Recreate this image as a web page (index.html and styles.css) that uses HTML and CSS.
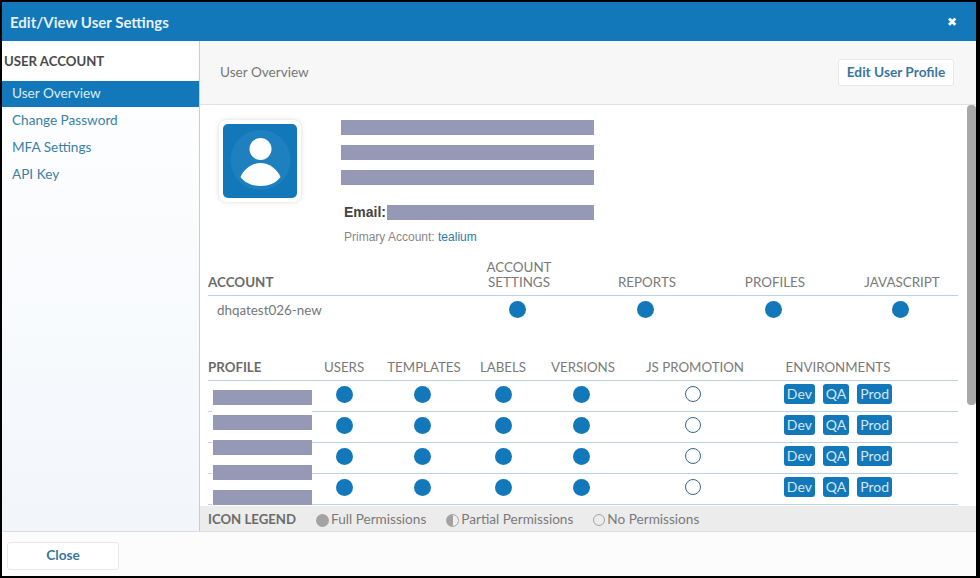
FILE: index.html
```html
<!DOCTYPE html>
<html lang="en">
<head>
    <meta charset="UTF-8">
    <title>Edit/View User Settings</title>
    <link rel="stylesheet" href="styles.css">
</head>
<body>
    <div class="modal">
        <header class="modal-header">
            <h1>Edit/View User Settings</h1>
            <span class="close-x">&#10006;</span>
        </header>
        <div class="modal-body">
            <aside class="sidebar">
                <h2>USER ACCOUNT</h2>
                <ul>
                    <li class="active"><a href="#">User Overview</a></li>
                    <li><a href="#">Change Password</a></li>
                    <li><a href="#">MFA Settings</a></li>
                    <li><a href="#">API Key</a></li>
                </ul>
            </aside>
            <main class="content">
                <div class="content-header">
                    <span class="content-title">User Overview</span>
                    <button class="btn-white btn-edit">Edit User Profile</button>
                </div>
                <div class="scroll-area">
                    <div class="profile-top">
                        <div class="avatar">
                            <svg width="74" height="74" viewBox="0 0 74 74">
                                <circle cx="37.5" cy="36" r="30" fill="#1f80c0"/>
                                <circle cx="37.5" cy="25" r="11" fill="#fff"/>
                                <path d="M17.5 53 C21 45 29 39 37.5 39 C46 39 54 45 57.5 53 C53 59 46 62 37.5 62 C29 62 22 59 17.5 53 Z" fill="#fff"/>
                            </svg>
                        </div>
                        <div class="details">
                            <div class="bar"></div>
                            <div class="bar"></div>
                            <div class="bar"></div>
                            <div class="email"><b>Email:</b><div class="bar email-bar"></div></div>
                            <div class="primary">Primary Account: <a href="#">tealium</a></div>
                        </div>
                    </div>

                    <div class="acct-grid acct-head">
                        <div class="first">ACCOUNT</div>
                        <div>ACCOUNT<br>SETTINGS</div>
                        <div>REPORTS</div>
                        <div>PROFILES</div>
                        <div class="last">JAVASCRIPT</div>
                    </div>
                    <div class="acct-grid acct-row">
                        <div class="acct-name">dhqatest026-new</div>
                        <div><i class="dot"></i></div>
                        <div><i class="dot"></i></div>
                        <div><i class="dot"></i></div>
                        <div><i class="dot dot-last"></i></div>
                    </div>

                    <div class="prof-table">
                        <div class="prof-grid prof-head">
                            <div class="first">PROFILE</div>
                            <div>USERS</div>
                            <div>TEMPLATES</div>
                            <div>LABELS</div>
                            <div>VERSIONS</div>
                            <div>JS PROMOTION</div>
                            <div>ENVIRONMENTS</div>
                        </div>
                        <div class="prof-grid prof-row">
                            <div></div>
                            <div><i class="dot dot-mid"></i></div>
                            <div><i class="dot"></i></div>
                            <div><i class="dot dot-mid"></i></div>
                            <div><i class="dot"></i></div>
                            <div><i class="dot dot-empty"></i></div>
                            <div class="envs"><span>Dev</span><span>QA</span><span>Prod</span></div>
                        </div>
                        <div class="prof-grid prof-row">
                            <div></div>
                            <div><i class="dot dot-mid"></i></div>
                            <div><i class="dot"></i></div>
                            <div><i class="dot dot-mid"></i></div>
                            <div><i class="dot"></i></div>
                            <div><i class="dot dot-empty"></i></div>
                            <div class="envs"><span>Dev</span><span>QA</span><span>Prod</span></div>
                        </div>
                        <div class="prof-grid prof-row">
                            <div></div>
                            <div><i class="dot dot-mid"></i></div>
                            <div><i class="dot"></i></div>
                            <div><i class="dot dot-mid"></i></div>
                            <div><i class="dot"></i></div>
                            <div><i class="dot dot-empty"></i></div>
                            <div class="envs"><span>Dev</span><span>QA</span><span>Prod</span></div>
                        </div>
                        <div class="prof-grid prof-row">
                            <div></div>
                            <div><i class="dot dot-mid"></i></div>
                            <div><i class="dot"></i></div>
                            <div><i class="dot dot-mid"></i></div>
                            <div><i class="dot"></i></div>
                            <div><i class="dot dot-empty"></i></div>
                            <div class="envs"><span>Dev</span><span>QA</span><span>Prod</span></div>
                        </div>
                        <!-- names are blacked out, the stack sits over the first column -->
                        <div class="name-cover">
                            <div class="bar"></div>
                            <div class="bar"></div>
                            <div class="bar"></div>
                            <div class="bar"></div>
                            <div class="bar"></div>
                        </div>
                    </div>
                    <div class="scrollbar"></div>
                </div>
                <div class="legend">
                    <b>ICON LEGEND</b>
                    <span class="legend-item"><i class="leg leg-full"></i>Full Permissions</span>
                    <span class="legend-item"><i class="leg leg-part"></i>Partial Permissions</span>
                    <span class="legend-item"><i class="leg leg-none"></i>No Permissions</span>
                </div>
            </main>
        </div>
        <footer class="modal-footer">
            <button class="btn-white btn-close">Close</button>
        </footer>
    </div>
</body>
</html>
```

FILE: styles.css
```css
* {
  box-sizing: border-box;
  margin: 0;
  padding: 0;
}

html, body {
  height: 100%;
}

body {
  background-color: #000;
  padding: 2px 4px 2px 2px;
  font-family: "Lato", sans-serif;
  color: #666;
  overflow: hidden;
}

.modal {
  height: 100%;
  display: flex;
  flex-direction: column;
  background-color: #fff;
}

.modal-header {
  height: 39px;
  flex: none;
  background-color: #1278ba;
  color: #fff;
  display: flex;
  align-items: center;
  justify-content: space-between;
  padding: 0 19px 0 8px;
}

.modal-header h1 {
  font-size: 15px;
  font-weight: 700;
  color: #e4f0f8;
}

.close-x {
  font-size: 12px;
  font-family: "DejaVu Sans", sans-serif;
}

.modal-body {
  flex: 1;
  display: flex;
  min-height: 0;
}

.sidebar {
  width: 198px;
  flex: none;
  border-right: 1px solid #ccc;
  background: linear-gradient(#fff, #f2f6fb);
}

.sidebar h2 {
  font-size: 13.2px;
  font-weight: 700;
  color: #4a4a4a;
  padding: 12px 0 0 2px;
  height: 40px;
}

.sidebar ul {
  list-style-type: none;
}

.sidebar li {
  height: 27px;
  line-height: 24px;
  padding-left: 10px;
  font-size: 13.6px;
}

.sidebar li a {
  color: #3b80a8;
  text-decoration: none;
}

.sidebar li.active {
  height: 26px;
  background-color: #1278ba;
  margin-bottom: 1px;
}

.sidebar li.active a {
  color: #dcecf6;
}

.content {
  flex: 1;
  min-width: 0;
  display: flex;
  flex-direction: column;
}

.content-header {
  height: 64px;
  flex: none;
  background-color: #f7f7f7;
  border-bottom: 1px solid #e2e2e2;
  display: flex;
  align-items: center;
  justify-content: space-between;
  padding: 0 22px 0 20px;
  font-size: 13.6px;
  color: #777;
}

.content-title {
  padding-bottom: 2px;
}

.btn-white {
  background-color: #fff;
  border: 1px solid #e8e8e8;
  border-radius: 3px;
  color: #3a76a0;
  font-family: inherit;
  font-weight: 700;
  font-size: 13.7px;
  height: 28px;
}

.btn-edit {
  width: 116px;
  height: 27px;
  padding-bottom: 3px;
}

.scroll-area {
  flex: 1;
  min-height: 0;
  position: relative;
  overflow: hidden;
  padding: 0 17px 0 8px;
}

.scrollbar {
  position: absolute;
  top: 0;
  right: 0;
  width: 9px;
  height: 300px;
  background-color: #a8a8a8;
  border-radius: 4px;
}

.profile-top {
  display: flex;
  height: 146px;
}

.avatar {
  width: 82px;
  height: 82px;
  margin: 15px 0 0 11px;
  padding: 4px;
  border-radius: 8px;
  background-color: #fff;
  box-shadow: 0 0 5px rgba(120, 110, 90, 0.25);
}

.avatar svg {
  display: block;
  background-color: #1278ba;
  border-radius: 5px;
}

.details {
  margin-left: 40px;
  padding-top: 15px;
  width: 253px;
  font-family: "Liberation Sans", Arial, sans-serif;
}

.bar {
  height: 15px;
  background-color: #9599b6;
  margin-bottom: 10px;
}

.email {
  display: flex;
  align-items: center;
  margin-top: 20px;
  padding-left: 3px;
  font-size: 14px;
  line-height: 15px;
  color: #444;
}

.email b {
  margin: 0 1px 0 0;
}

.email-bar {
  flex: 1;
  margin: 0;
}

.primary {
  margin-top: 10px;
  padding-left: 3px;
  font-size: 12px;
  color: #888;
}

.primary a {
  color: #2b7aa6;
  text-decoration: none;
}

.acct-grid {
  display: grid;
  grid-template-columns: 247px 128px 128px 128px 1fr;
  width: 750px;
  text-align: center;
}

.acct-head {
  align-items: end;
  font-size: 13.4px;
  line-height: 15px;
  color: #7a7a7a;
  height: 45px;
  padding-bottom: 5px;
  border-bottom: 1px solid #bcd3e4;
}

.first {
  text-align: left;
  font-weight: 700;
  color: #6b6b6b;
}

.last {
  padding-left: 7px;
}

.acct-row {
  height: 27px;
  align-items: center;
}

.acct-name {
  text-align: left;
  padding-left: 9px;
  font-size: 13.4px;
  color: #777;
}

.dot {
  display: block;
  width: 17px;
  height: 17px;
  margin: 0 auto;
  position: relative;
  left: -2px;
  border-radius: 50%;
  background-color: #1278ba;
}

.dot-last {
  left: 2px;
}

.dot-mid {
  left: 0;
}

.dot-empty {
  background-color: #fff;
  border: 1px solid #35688a;
  width: 16px;
  height: 16px;
  left: -2px;
}

.prof-table {
  position: relative;
  margin-top: 31px;
  width: 750px;
}

.prof-grid {
  display: grid;
  grid-template-columns: 106px 60px 100px 58px 102px 122px 164px 38px;
  align-items: center;
  text-align: center;
}

.prof-head {
  height: 27px;
  font-size: 13.3px;
  color: #7a7a7a;
  border-bottom: 1px solid #bcd3e4;
}

.prof-row {
  height: 31px;
  padding-bottom: 4px;
  border-bottom: 1px solid #bcd3e4;
}

.envs {
  display: flex;
  gap: 8px;
  justify-content: center;
}

.envs span {
  height: 20px;
  line-height: 19px;
  padding: 0 3px;
  font-size: 14px;
  color: #d2e6f3;
  background-color: #1278ba;
  border-radius: 3px;
}

.name-cover {
  position: absolute;
  left: 4px;
  top: 27px;
  width: 100px;
  height: 127px;
  background-color: #fff;
  padding: 9px 0 0 1px;
}

.legend {
  height: 25px;
  flex: none;
  background-color: #ececec;
  display: flex;
  align-items: center;
  padding: 1px 0 0 8px;
  font-size: 13.6px;
  color: #7a7a7a;
}

.legend b {
  color: #6b6b6b;
  font-size: 13.2px;
  margin-right: 20px;
}

.legend-item {
  display: flex;
  align-items: center;
  margin-right: 20px;
}

.leg {
  display: inline-block;
  width: 13px;
  height: 13px;
  margin: 2px 2px 0 0;
  border-radius: 50%;
}

.leg-full {
  background-color: #a3a3a3;
}

.leg-part {
  border: 1px solid #a3a3a3;
  background: linear-gradient(90deg, #a3a3a3 50%, #eee 50%);
}

.leg-none {
  border: 1px solid #a3a3a3;
  width: 12px;
  height: 12px;
}

.modal-footer {
  height: 45px;
  flex: none;
  background-color: #fcfcfc;
  border-top: 1px solid #dcdcdc;
  padding: 10px 0 0 5px;
}

.btn-close {
  width: 112px;
  padding-bottom: 4px;
}
```
